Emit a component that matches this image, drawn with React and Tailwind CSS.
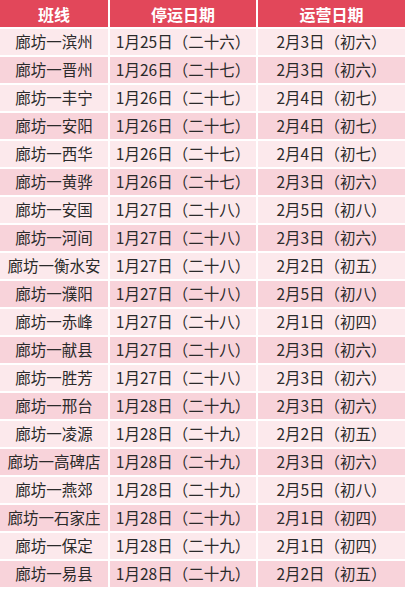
import React from "react";

const rows = [
  ["廊坊一滨州", "1月25日（二十六）", "2月3日（初六）"],
  ["廊坊一晋州", "1月26日（二十七）", "2月3日（初六）"],
  ["廊坊一丰宁", "1月26日（二十七）", "2月4日（初七）"],
  ["廊坊一安阳", "1月26日（二十七）", "2月4日（初七）"],
  ["廊坊一西华", "1月26日（二十七）", "2月4日（初七）"],
  ["廊坊一黄骅", "1月26日（二十七）", "2月3日（初六）"],
  ["廊坊一安国", "1月27日（二十八）", "2月5日（初八）"],
  ["廊坊一河间", "1月27日（二十八）", "2月3日（初六）"],
  ["廊坊一衡水安", "1月27日（二十八）", "2月2日（初五）"],
  ["廊坊一濮阳", "1月27日（二十八）", "2月5日（初八）"],
  ["廊坊一赤峰", "1月27日（二十八）", "2月1日（初四）"],
  ["廊坊一献县", "1月27日（二十八）", "2月3日（初六）"],
  ["廊坊一胜芳", "1月27日（二十八）", "2月3日（初六）"],
  ["廊坊一邢台", "1月28日（二十九）", "2月3日（初六）"],
  ["廊坊一凌源", "1月28日（二十九）", "2月2日（初五）"],
  ["廊坊一高碑店", "1月28日（二十九）", "2月3日（初六）"],
  ["廊坊一燕郊", "1月28日（二十九）", "2月5日（初八）"],
  ["廊坊一石家庄", "1月28日（二十九）", "2月1日（初四）"],
  ["廊坊一保定", "1月28日（二十九）", "2月1日（初四）"],
  ["廊坊一易县", "1月28日（二十九）", "2月2日（初五）"],
];

export default function App() {
  return (
    <div
      className="w-[405px] h-[589px] bg-white overflow-hidden"
      style={{ fontFamily: '"Noto Sans CJK SC", "Noto Sans", sans-serif' }}
    >
      <div className="grid grid-cols-[108px_146px_1fr] gap-x-[2px] gap-y-[2px]">
        {["班线", "停运日期", "运营日期"].map((h) => (
          <div
            key={h}
            className="h-[27px] bg-[#e2475a] text-white font-bold text-[16px] flex items-center justify-center leading-none"
          >
            {h}
          </div>
        ))}
        {rows.map((r, i) =>
          r.map((c, j) => (
            <div
              key={i + "-" + j}
              className={
                "h-[26px] flex items-center justify-center text-[15.5px] leading-none text-[#2a2a2a] whitespace-nowrap " +
                (i % 2 === 0 ? "bg-[#fce9ec]" : "bg-[#f8d3da]")
              }
            >
              {c}
            </div>
          ))
        )}
      </div>
    </div>
  );
}
